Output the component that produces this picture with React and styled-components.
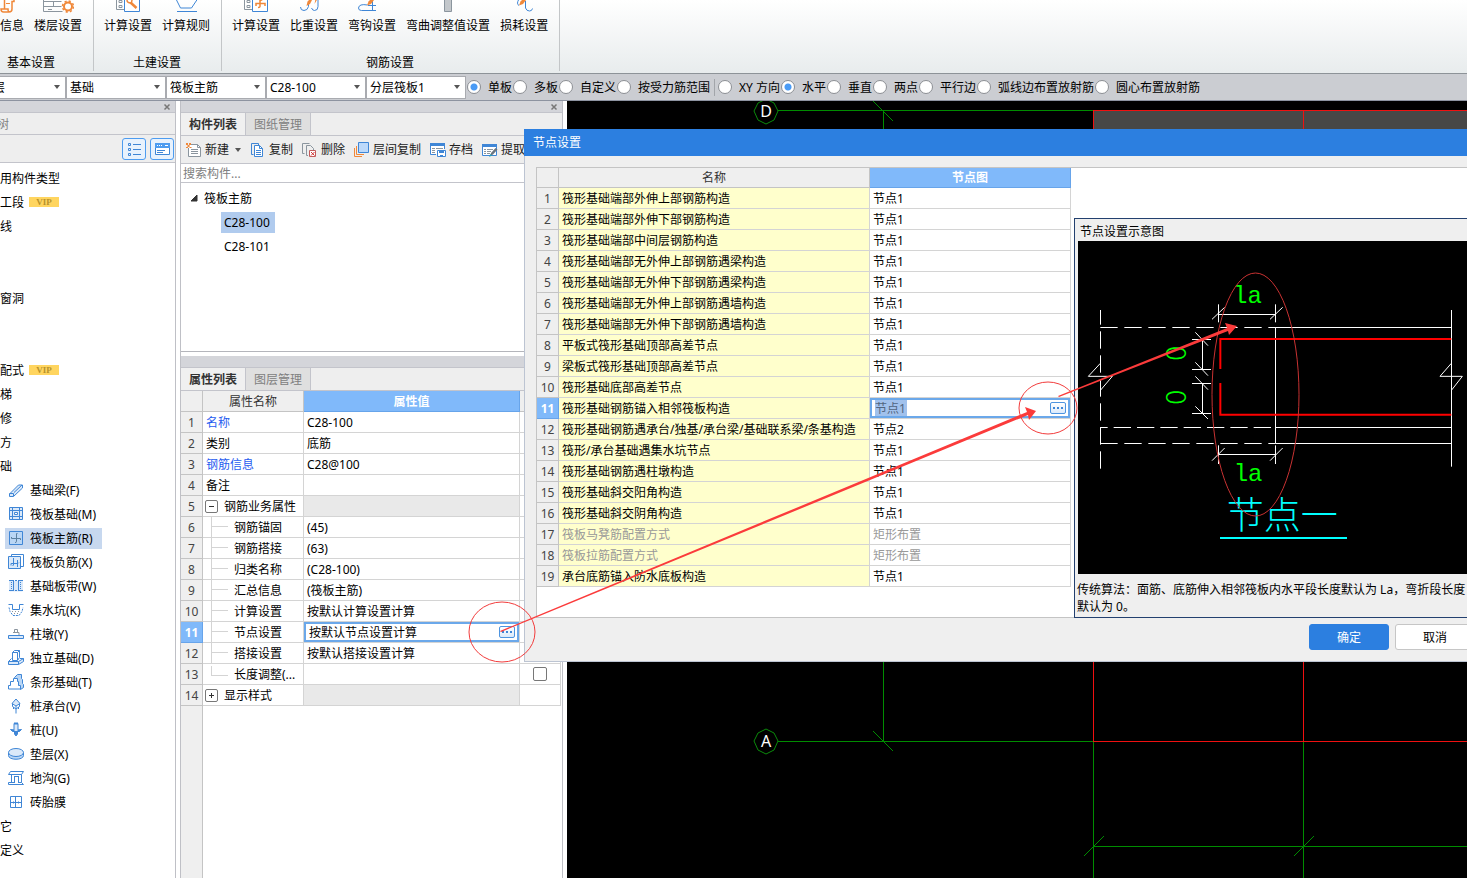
import React, { useState } from "react";
import styled, { createGlobalStyle, css } from "styled-components";

const GlobalStyle = createGlobalStyle`
  * {
    box-sizing: border-box;
  }
  body {
    margin: 0;
    background: #ffffff;
    overflow: hidden;
  }
  body, button, input, select {
    font-family: "Noto Sans", "Noto Sans CJK SC", sans-serif;
    font-size: 12px;
    line-height: 17px;
    color: #000000;
  }
  button, input, select {
    margin: 0;
    padding: 0;
    border: 0;
    background: none;
  }
`;

const Page = styled.div`
  position: relative;
  display: flex;
  flex-direction: column;
  min-height: 100vh;
  overflow: hidden;
  white-space: nowrap;
`;

/* ---------- ribbon ---------- */

const Ribbon = styled.header`
  display: flex;
  padding-bottom: 2px;
  border-bottom: 1px solid #8d9398;
  background: linear-gradient(#ffffff, #e8eced);
`;

const RibbonGroup = styled.section`
  display: flex;
  flex-direction: column;
  justify-content: space-between;
  height: 71px;
  padding: 0 11px 0 ${({ $cut }) => ($cut ? 0 : 10)}px;
  border-right: 1px solid #c3c6c8;
`;

const RibbonItems = styled.div`
  display: flex;
  gap: 10px;
`;

const RibbonButton = styled.button`
  display: flex;
  flex-direction: column;
  align-items: ${({ $cut }) => ($cut ? "flex-start" : "center")};
  gap: 4px;
`;

const RibbonLabel = styled.div`
  text-align: center;
  padding-right: ${({ $cut }) => ($cut ? 20 : 0)}px;
`;

/* ---------- option bar ---------- */

const OptionBar = styled.div`
  display: flex;
  align-items: center;
  height: 27px;
  border-bottom: 1px solid #8d93a0;
  background: #cbcdd2;
`;

const SelectBox = styled.div`
  display: grid;
  align-items: center;
  width: ${({ $cut }) => ($cut ? 66 : 100)}px;
  height: 23px;
  border: 1px solid #a9abb0;
  border-left-width: ${({ $cut }) => ($cut ? 0 : 1)}px;
  background: #ffffff;
  overflow: hidden;

  > * {
    grid-area: 1 / 1;
  }
  select {
    appearance: none;
    width: 100%;
    height: 21px;
    margin-left: ${({ $cut }) => ($cut ? -10 : 0)}px;
    padding-left: 3px;
  }
  svg {
    justify-self: end;
    margin-right: 5px;
    pointer-events: none;
  }
`;

const RadioGroup = styled.div`
  display: flex;
  align-items: center;
  padding-left: 1px;

  & + & {
    margin-left: 3px;
    padding-left: 3px;
    border-left: 1px solid #a2a5aa;
  }
`;

const RadioLabel = styled.label`
  display: flex;
  align-items: center;
  gap: 7px;
  margin-right: 1px;

  input {
    appearance: none;
    width: 14px;
    height: 14px;
    border: 1px solid #8c8f94;
    border-radius: 50%;
    background: #ffffff;
  }
  input:checked {
    background: radial-gradient(circle, #4a9bf5 0 3px, #ffffff 4px);
  }
`;

/* ---------- side panels ---------- */

const Workspace = styled.main`
  display: flex;
  flex: 1;
`;

const NavPanel = styled.aside`
  width: 176px;
  border-right: 1px solid #bfc0c6;
`;

const PanelStrip = styled.div`
  display: flex;
  justify-content: flex-end;
  align-items: center;
  height: 12px;
  padding-right: 4px;
  border-bottom: 1px solid #c3c4cb;
  background: #d4d5da;

  button {
    display: flex;
  }
`;

const NavTitle = styled.div`
  height: 22px;
  padding: 3px 0;
  border-bottom: 1px solid #c3c4cb;
  background: #eeeeee;
  color: #808080;
  text-indent: -3px;
`;

const NavTools = styled.div`
  display: flex;
  justify-content: flex-end;
  align-items: center;
  gap: 4px;
  height: 28px;
  padding-right: 1px;
  border-bottom: 1px solid #c3c4cb;
  background: #eeeeee;

  button {
    display: flex;
    align-items: center;
    justify-content: center;
    width: 24px;
    height: 22px;
    border: 1px solid #4d9cf0;
    border-radius: 3px;
    background: #e8f2fd;
  }
`;

const NavTree = styled.ul`
  margin: 0;
  padding: 3px 0 0;
  list-style: none;
`;

const NavRow = styled.li`
  display: flex;
  align-items: center;
  gap: 5px;
  height: 24px;
  padding-left: ${({ $leaf }) => ($leaf ? 5 : 0)}px;
`;

const NavLeaf = styled.span`
  display: flex;
  align-items: center;
  gap: 6px;
  height: 21px;
  padding: 0 9px 0 3px;
  background: ${({ $active }) => ($active ? "#c7d8ef" : "transparent")};
`;

const VipBadge = styled.span`
  width: 30px;
  height: 10px;
  background: #ffd55f;
  color: #b8922c;
  font: bold 9px/10px "Liberation Serif", serif;
  text-align: center;
`;

const MidPanel = styled.section`
  display: flex;
  flex-direction: column;
  width: 383px;
  margin: 0 4px;
  border: solid #bfc0c6;
  border-width: 0 1px;
`;

const Tabs = styled.div`
  display: flex;
  height: 23px;
  border-bottom: 1px solid #c3c4cb;
  background: #eeeeee;
`;

const Tab = styled.button`
  width: 65px;
  border-right: 1px solid #c3c4cb;
  background: ${({ $active }) => ($active ? "#f0f0f0" : "#dfdfdf")};
  color: ${({ $active }) => ($active ? "#333333" : "#808080")};
  font-weight: ${({ $active }) => ($active ? 700 : 400)};
`;

const Toolbar = styled.div`
  display: flex;
  align-items: center;
  gap: 9px;
  height: 28px;
  padding-left: 5px;
  border-bottom: 1px solid #c3c4cb;
  background: #eeeeee;
  overflow: hidden;
`;

const ToolButton = styled.button`
  display: flex;
  flex: none;
  align-items: center;
  gap: 3px;
  color: #222222;
`;

const SearchInput = styled.input`
  width: 100%;
  height: 19px;
  padding-left: 2px;
  border-bottom: 1px solid #c3c4cb;

  &::placeholder {
    color: #808080;
  }
`;

const PartTree = styled.ul`
  height: 169px;
  margin: 0 0 4px;
  padding: 3px 0 0;
  border-bottom: 1px solid #b4b5bb;
  list-style: none;
`;

const PartRow = styled.li`
  display: flex;
  align-items: center;
  gap: 6px;
  height: 24px;
  padding-left: ${({ $depth }) => ($depth ? 40 : 9)}px;

  span {
    height: 21px;
    padding: 2px 5px 2px 3px;
    background: ${({ $active }) => ($active ? "#b0cbee" : "transparent")};
  }
`;

/* ---------- grids ---------- */

const Grid = styled.table`
  flex: none;
  align-self: flex-start;
  border-collapse: separate;
  border-spacing: 0;
  table-layout: fixed;

  th,
  td {
    height: 21px;
    padding: 0 3px;
    border: solid #d4d4d4;
    border-width: 0 1px 1px 0;
    font-weight: 400;
    text-align: left;
    overflow: hidden;
  }
  thead th {
    border-color: #c4c4c4;
    background: #efefef;
    color: #333333;
    text-align: center;
  }
`;

const hot = css`
  && {
    border-color: #67a4ea;
    background: #80b9fa;
    color: #ffffff;
    font-weight: 700;
  }
`;

const HeadCell = styled.th`
  ${({ $hot }) => $hot && hot}
`;

const IndexCell = styled.th`
  && {
    padding: 0;
    border-color: #c4c4c4;
    background: #efefef;
    color: #444444;
    text-align: center;
  }
  ${({ $hot }) => $hot && hot}
`;

const NameCell = styled.td`
  background: ${({ $yellow }) => ($yellow ? "#ffffcc" : "#ffffff")};
  color: ${({ $tone }) => $tone || "#000000"};
`;

const ValueCell = styled.td`
  background: ${({ $shaded }) => ($shaded ? "#e9e9e9" : "#ffffff")};
  color: ${({ $tone }) => $tone || "#000000"};

  && {
    padding: ${({ $editing }) => ($editing ? 0 : "0 3px")};
  }
`;

const NameLine = styled.div`
  display: flex;
  align-items: center;
  gap: 6px;
  margin-left: -1px;
`;

const Branch = styled.span`
  align-self: flex-start;
  width: 17px;
  height: ${({ $last }) => ($last ? 10 : 20)}px;
  margin-left: 6px;
  border-left: 1px solid #d4d4d4;
  background: linear-gradient(#d4d4d4, #d4d4d4) 0 9px / 17px 1px no-repeat;
`;

const Expander = styled.button`
  display: flex;
  align-items: center;
  justify-content: center;
  width: 13px;
  height: 13px;
  border: 1px solid #777777;
  border-radius: 2px;
  background: #ffffff;
`;

const Editor = styled.div`
  display: flex;
  align-items: center;
  justify-content: space-between;
  height: 20px;
  padding: 0 2px 0 3px;
  border: 2px solid #6ba8ea;

  input {
    width: ${({ $picked }) => ($picked ? 32 : 160)}px;
    height: 16px;
    background: ${({ $picked }) => ($picked ? "#a1c1ec" : "transparent")};
    color: ${({ $picked }) => ($picked ? "#51657f" : "#000000")};
  }
`;

const MoreButton = styled.button`
  display: flex;
  align-items: center;
  justify-content: center;
  gap: 2px;
  width: 16px;
  height: 12px;
  border: 1px solid #4d94e0;
  border-radius: 2px;
  background: linear-gradient(#ffffff, #dbeafb);

  i {
    width: 2px;
    height: 2px;
    background: #3f86d6;
  }
`;

const GridTick = styled.input`
  appearance: none;
  display: block;
  width: 14px;
  height: 14px;
  margin: 0 auto;
  border: 1px solid #777777;
  border-radius: 2px;
  background: #ffffff;
`;

const GridRest = styled.div`
  flex: 1;
  width: 22px;
  border-right: 1px solid #c4c4c4;
  background: #efefef;
`;

/* ---------- drawing area ---------- */

const Viewport = styled.section`
  flex: 1;
  background: #000000;
  overflow: hidden;

  svg {
    display: block;
    width: 100%;
    height: 100%;
  }
`;

/* ---------- dialog ---------- */

const Dialog = styled.section`
  position: absolute;
  top: 129px;
  left: 524px;
  right: -20px;
  border: solid #bcc4d2;
  border-width: 0 0 1px 1px;
  background: #efefef;
`;

const DialogTitle = styled.h2`
  margin: 0 0 0 -1px;
  padding: 5px 9px;
  background: #2c7fe0;
  color: #ffffff;
  font-size: 12px;
  font-weight: 400;
  line-height: 17px;
`;

const DialogBody = styled.div`
  display: flex;
  align-items: flex-end;
  gap: 3px;
  margin: 11px 12px 0 11px;
  border: solid #c4c4c4;
  border-width: 1px 0 1px 1px;
  background: #ffffff;

  ${Grid} {
    margin-bottom: 30px;
  }
  thead th {
    height: 20px;
  }
`;

const Preview = styled.figure`
  flex: 1;
  margin: 0 0 -1px;
  border: 1px solid #23406f;
  background: #efefef;
  white-space: normal;
`;

const PreviewTitle = styled.div`
  padding: 4px 5px 1px;
`;

const PreviewStage = styled.div`
  margin-left: 3px;
  background: #000000;
  overflow: hidden;

  svg {
    display: block;
  }
`;

const PreviewNote = styled.figcaption`
  padding: 7px 0 2px 2px;
`;

const DialogFooter = styled.footer`
  display: flex;
  justify-content: flex-end;
  gap: 6px;
  padding: 6px 12px 11px;
`;

const DialogButton = styled.button`
  width: 80px;
  height: 26px;
  border: 1px solid ${({ $primary }) => ($primary ? "#2c7fe0" : "#c6c6c6")};
  border-radius: 3px;
  background: ${({ $primary }) => ($primary ? "#2c7fe0" : "#ffffff")};
  color: ${({ $primary }) => ($primary ? "#ffffff" : "#000000")};
`;

const Markup = styled.svg`
  position: absolute;
  inset: 0;
  width: 100%;
  height: 100%;
  pointer-events: none;
`;

/* ---------- icons ---------- */

const BLUE = "#3f86d6";
const PALE = "#dbe9f9";
const ORANGE = "#f0883a";
const GREY = "#8b959e";

const navIcons = {
  beam: (
    <>
      <path d="M2 11.500 10.500 3h4v3L6 14z" fill={PALE} stroke={BLUE} />
      <path d="M6 10.500 14 3M1.500 11.500h4v3h-4z" fill={PALE} stroke={BLUE} />
    </>
  ),
  raft: (
    <>
      <path d="M1.500 1.500h13v12h-13z" fill={PALE} stroke={BLUE} />
      <path d="M4.500 1v13M11.500 1v13M1 4.500h14M1 10.500h14" stroke={BLUE} />
      <path d="M6.500 6.500h3v2h-3z" fill="#fff" stroke={BLUE} />
    </>
  ),
  mainBar: (
    <>
      <path d="M1.500 1.500h13v13h-13z" fill="#b9d6f5" stroke={BLUE} />
      <path d="M9.500 3.500h-1v8q0 1-1.500 1M3.500 7v1.500h9V10" stroke="#5a7f9f" />
    </>
  ),
  negBar: (
    <>
      <path d="M3.500 2.500v-2h12v12h-3" stroke={BLUE} />
      <path d="M.5 2.500h12v12H.5z" fill={PALE} stroke={BLUE} />
      <path d="M5.500 4v7l-1 1M9.500 6v7M3 9.500h7l1-1M3 9.500v2" stroke={BLUE} />
    </>
  ),
  strip: (
    <>
      <path d="M1.500 3v10h13V3" fill={PALE} stroke={PALE} />
      <path d="M1 2.500h5M7 2.500h2M10 2.500h5M1 12.500h5M7 12.500h2M10 12.500h5M5.500 2v11M10.500 2v11" stroke={BLUE} />
      <path d="M3.500 4v8M12.500 4v8" stroke={BLUE} strokeDasharray="1 1" />
    </>
  ),
  sump: (
    <>
      <path d="M.5 2.500h4v5h7v-5h4" stroke={BLUE} />
      <path d="M1 5.500l1 4 3 4h6l3-4 1-4" stroke={BLUE} strokeDasharray="2 1" />
      <path d="M4 9.500h8M6 11.500h5" stroke={GREY} strokeDasharray="1 2" />
    </>
  ),
  pier: (
    <>
      <path d="M6.500 3.500h3v3h-3zM5 6.500h6v3" stroke={GREY} />
      <path d="M.5 9.500h15v3H.5z" fill={PALE} stroke={BLUE} />
    </>
  ),
  footing: (
    <>
      <path d="M.5 11.500h10v3H.5zM10.500 14.500l5-3v-3l-5 3M.5 11.500l3-3M12 8.500h3.500" fill={PALE} stroke={BLUE} />
      <path d="M4.500 10.500V2.500L6.500.5h5v7l-2 3z" fill="#fff" stroke={BLUE} />
      <path d="M9.500 10V2.500h-5M9.500 2.500l2-2" stroke={BLUE} />
    </>
  ),
  stripFooting: (
    <>
      <path d="M6.500 3.500l3-3h4v4l1 1v4l1 1v3l-3 2z" fill="#b9d6f5" stroke={BLUE} />
      <path d="M.5 15V11.500h2v-4h3v-3h4v3h1v4h2V15z" fill="#fff" stroke={BLUE} />
    </>
  ),
  cap: (
    <>
      <path d="M8 1l4 4.500L8 8 4 5.500z" fill={PALE} stroke={BLUE} />
      <path d="M4.500 5.500v3L8 11l3.500-2.500v-3M8 8v7.500M5.500 9v2M10.500 9v2" stroke={BLUE} />
    </>
  ),
  pile: (
    <>
      <path d="M2.500 7.500l2 2h2V12l1.500 2 1.500-2V9.500h2l2-2-4 .5h-3z" fill={BLUE} stroke={BLUE} />
      <path d="M6 1.500h4v8H6z" fill={PALE} stroke={BLUE} />
      <path d="M6 1.500h4" stroke={BLUE} strokeWidth="2" />
    </>
  ),
  bedding: (
    <>
      <path d="M.5 6.500v3c0 5 15 5 15 0v-3" fill="#b9d6f5" stroke={BLUE} />
      <ellipse cx="8" cy="6.500" rx="7.500" ry="4" fill={PALE} stroke={BLUE} />
    </>
  ),
  trench: (
    <path
      d="M.5 4.500l2-3h13l-2 3zM3.500 4.500v8M13.500 4.500v8M6.500 6v7M10.500 6v7M6.500 6.500h4M.5 14.500v-2h6M10.500 12.500h3l2 2H.5"
      stroke={BLUE}
    />
  ),
  brick: (
    <>
      <path d="M2.500 2.500h11v11h-11z" fill="#fff" stroke={BLUE} />
      <path d="M7.500 2v12M2 8.500h12M5.500 7.500v2M10.500 7.500v2" stroke={BLUE} />
    </>
  ),
};

const toolIcons = {
  create: (
    <>
      <path d="M4.500 2.500h7l3 3v9h-12V6" fill="#fff" stroke={GREY} />
      <path d="M11.500 2.500v3h3M5 7.500h7M5 9.500h7M5 11.500h7" stroke={GREY} />
      <path d="M0 1h2v2H0zM3 1h2v2H3zM1.500 3h2v2h-2zM0 5h2v1H0zM3.500 5h2v1h-2z" fill={ORANGE} />
    </>
  ),
  copy: (
    <>
      <path d="M3.500 12.500h-2v-11h7v2" stroke={BLUE} />
      <path d="M4.500 3.500h5l3 3v8h-8z" fill="#fff" stroke={BLUE} />
      <path d="M9.500 3.500v3h3M6 8.500h5M6 10.500h5M6 12.500h5" stroke={BLUE} />
    </>
  ),
  remove: (
    <>
      <path d="M2.500 11.500h-2v-10h7M6 13.500H4.500v-10h4l3 3V8" stroke={GREY} />
      <path d="M7.500 8.500h6v6h-6z" fill="#fff" stroke="#c25a5a" />
      <path d="M9 10l3.500 3.500M12.500 10 9 13.500" stroke="#d22f2f" />
    </>
  ),
  layer: (
    <>
      <path d="M4.500.5h10v10h-10z" fill="#bcd9fa" stroke={BLUE} />
      <path d="M2.500 4v8.500H10M.5 6v8.500H8" stroke={ORANGE} />
    </>
  ),
  save: (
    <>
      <path d="M6 12.500H.5V1.500h14V7" fill="#fff" stroke={BLUE} />
      <path d="M0 1h15v3H0z" fill={BLUE} />
      <path d="M2 6.500h3M6 6.500h7M2 8.500h3M2 10.500h3" stroke={GREY} />
      <path d="M7.500 8.500h8v6h-8z" fill="#fff" stroke={BLUE} />
      <path d="M9 8h5v3H9zM10 13h3v2h-3z" fill={BLUE} />
    </>
  ),
  extract: (
    <>
      <path d="M.5 2.500h14v11H.5z" fill="#fff" stroke={BLUE} />
      <path d="M0 2h15v3H0z" fill={BLUE} />
      <path d="M2 7.500h2M5 7.500h6M2 9.500h2M5 9.500h4M2 11.500h2M5 11.500h3" stroke={GREY} />
      <path d="M8 14l1-3 4.500-5 2 1.500-4.500 5z" fill="#6b7680" />
      <path d="M7 15l1.500-3 1.500 1.500z" fill="#22a3b5" />
    </>
  ),
};

const sheet = (
  <>
    <path d="M4.500-6v15.500h8M7 .5h3v2H7zM7 5.500h3v2H7z" stroke={GREY} />
    <path d="M12.500-6h15v17.500h-15z" fill="#fff" stroke={BLUE} />
  </>
);

const ribbonIcons = {
  info: (
    <>
      <path d="M4.500-2v10.500M14-.5v2h-2V9q0 3-3 3H3.500q-2.500 0-2.500-3h7q0 3 1.500 3" stroke={ORANGE} strokeWidth="1.500" />
      <path d="M6 3.500h4" stroke={ORANGE} />
    </>
  ),
  floor: (
    <>
      <path d="M1.500-3v14.500h19M1.500 1.500h18M1.500 6.500h18M11.500 2v5M6 9.500h4" stroke={GREY} />
      <circle cx="26" cy="6.500" r="6" fill="#fff" />
      <circle cx="26" cy="6.500" r="4" stroke={ORANGE} strokeWidth="2" />
      <circle cx="26" cy="6.500" r="5.500" stroke={ORANGE} strokeWidth="1.500" strokeDasharray="2.200 2.120" />
    </>
  ),
  calc: (
    <>
      {sheet}
      <path d="M15 0q0 3 4 3M19 3q1-1 1-4" stroke={ORANGE} strokeWidth="1.500" />
      <path d="M18.500 2.500l6 5.500" stroke={ORANGE} strokeWidth="2.500" />
    </>
  ),
  rule: <path d="M6-1l4.500 9h11l6-9M7 11.500h20" stroke={BLUE} />,
  rebar: (
    <>
      {sheet}
      <path d="M20-2v8.500q0 1-2 1M16 6V3.500h9V6M23-1l-3 2" stroke={ORANGE} strokeWidth="1.500" />
    </>
  ),
  weight: (
    <>
      <path d="M10.500 3v3.500q-1 4-4.500 4T2.500 7M20-1v7.500q0 4-3.500 4-2 0-3-2.500" stroke={BLUE} />
      <path d="M8.500 6l1-4.500L12-1l2 1-2 4zM16.500 4l1-5 2 0z" fill={ORANGE} />
    </>
  ),
  hook: (
    <>
      <path d="M11.500 5Q3 3.500 2.500 8q0 2.500 3 2.500H20M16.500 1v9.500M12 5.500h8" stroke={BLUE} />
      <path d="M11 5.500l1.500-4L15-1h3v1l-3 4z" fill={ORANGE} />
    </>
  ),
  bend: <path d="M12.500-2h7v13.500h-7z" fill="#c3c7cb" stroke={GREY} />,
  loss: (
    <>
      <path d="M17.500 1v7q1 3 4 3 2.500 0 3-2.500M11-1q-3 5 0 6.500" stroke={BLUE} />
      <path d="M11 5.500l1.500-4L15-1h3v1l-3 4z" fill={ORANGE} />
    </>
  ),
};

const Icon = ({ children, width = 16, height = 16 }) => (
  <svg width={width} height={height} viewBox={`0 0 ${width} ${height}`} fill="none" aria-hidden="true">
    {children}
  </svg>
);

const Caret = () => (
  <Icon width={6} height={4}>
    <path d="M0 0h6L3 4z" fill="#555" />
  </Icon>
);

const CloseMark = () => (
  <button type="button" aria-label="关闭">
    <Icon width={8} height={8}>
      <path d="M1.500 1.500l5 5M6.500 1.500l-5 5" stroke="#777" strokeWidth="1.500" />
    </Icon>
  </button>
);

const More = () => (
  <MoreButton type="button" aria-label="更多">
    <i />
    <i />
    <i />
  </MoreButton>
);

/* ---------- data ---------- */

const ribbonGroups = [
  {
    label: "基本设置",
    cut: true,
    items: [
      ["info", "信息"],
      ["floor", "楼层设置"],
    ],
  },
  {
    label: "土建设置",
    items: [
      ["calc", "计算设置"],
      ["rule", "计算规则"],
    ],
  },
  {
    label: "钢筋设置",
    items: [
      ["rebar", "计算设置"],
      ["weight", "比重设置"],
      ["hook", "弯钩设置"],
      ["bend", "弯曲调整值设置"],
      ["loss", "损耗设置"],
    ],
  },
];

const selects = ["层", "基础", "筏板主筋", "C28-100", "分层筏板1"];
const shapes = ["单板", "多板", "自定义", "按受力筋范围"];
const directions = ["XY 方向", "水平", "垂直", "两点", "平行边", "弧线边布置放射筋", "圆心布置放射筋"];

const navRows = [
  { text: "用构件类型" },
  { text: "工段", vip: true },
  { text: "线" },
  {},
  {},
  { text: "窗洞" },
  {},
  {},
  { text: "配式", vip: true },
  { text: "梯" },
  { text: "修" },
  { text: "方" },
  { text: "础" },
  { icon: "beam", text: "基础梁(F)" },
  { icon: "raft", text: "筏板基础(M)" },
  { icon: "mainBar", text: "筏板主筋(R)", active: true },
  { icon: "negBar", text: "筏板负筋(X)" },
  { icon: "strip", text: "基础板带(W)" },
  { icon: "sump", text: "集水坑(K)" },
  { icon: "pier", text: "柱墩(Y)" },
  { icon: "footing", text: "独立基础(D)" },
  { icon: "stripFooting", text: "条形基础(T)" },
  { icon: "cap", text: "桩承台(V)" },
  { icon: "pile", text: "桩(U)" },
  { icon: "bedding", text: "垫层(X)" },
  { icon: "trench", text: "地沟(G)" },
  { icon: "brick", text: "砖胎膜" },
  { text: "它" },
  { text: "定义" },
];

const tools = [
  ["create", "新建"],
  ["copy", "复制"],
  ["remove", "删除"],
  ["layer", "层间复制"],
  ["save", "存档"],
  ["extract", "提取"],
];

const properties = [
  { name: "名称", value: "C28-100", link: true },
  { name: "类别", value: "底筋" },
  { name: "钢筋信息", value: "C28@100", link: true },
  { name: "备注", value: "" },
  { name: "钢筋业务属性", group: "open" },
  { name: "钢筋锚固", value: "(45)", child: true },
  { name: "钢筋搭接", value: "(63)", child: true },
  { name: "归类名称", value: "(C28-100)", child: true },
  { name: "汇总信息", value: "(筏板主筋)", child: true },
  { name: "计算设置", value: "按默认计算设置计算", child: true },
  { name: "节点设置", value: "按默认节点设置计算", child: true, editing: true },
  { name: "搭接设置", value: "按默认搭接设置计算", child: true },
  { name: "长度调整(...", value: "", child: true, last: true, tick: true },
  { name: "显示样式", group: "closed" },
];

const nodes = [
  ["筏形基础端部外伸上部钢筋构造", "节点1"],
  ["筏形基础端部外伸下部钢筋构造", "节点1"],
  ["筏形基础端部中间层钢筋构造", "节点1"],
  ["筏形基础端部无外伸上部钢筋遇梁构造", "节点1"],
  ["筏形基础端部无外伸下部钢筋遇梁构造", "节点1"],
  ["筏形基础端部无外伸上部钢筋遇墙构造", "节点1"],
  ["筏形基础端部无外伸下部钢筋遇墙构造", "节点1"],
  ["平板式筏形基础顶部高差节点", "节点1"],
  ["梁板式筏形基础顶部高差节点", "节点1"],
  ["筏形基础底部高差节点", "节点1"],
  ["筏形基础钢筋锚入相邻筏板构造", "节点1"],
  ["筏形基础钢筋遇承台/独基/承台梁/基础联系梁/条基构造", "节点2"],
  ["筏形/承台基础遇集水坑节点", "节点1"],
  ["筏形基础钢筋遇柱墩构造", "节点1"],
  ["筏形基础斜交阳角构造", "节点1"],
  ["筏形基础斜交阴角构造", "节点1"],
  ["筏板马凳筋配置方式", "矩形布置"],
  ["筏板拉筋配置方式", "矩形布置"],
  ["承台底筋锚入防水底板构造", "节点1"],
];
const activeNode = 10;

/* ---------- parts ---------- */

const PropertyName = ({ row }) => {
  if (row.group) {
    return (
      <NameLine>
        <Expander type="button" aria-label={row.name}>
          <Icon width={7} height={7}>
            <path d={row.group === "closed" ? "M1 3.500h5M3.500 1v5" : "M1 3.500h5"} stroke="#333" />
          </Icon>
        </Expander>
        {row.name}
      </NameLine>
    );
  }
  if (row.child) {
    return (
      <NameLine>
        <Branch $last={row.last} />
        {row.name}
      </NameLine>
    );
  }
  return row.name;
};

const PropertyGrid = () => (
  <Grid>
    <colgroup>
      <col width="22" />
      <col width="101" />
      <col width="216" />
      <col width="41" />
    </colgroup>
    <thead>
      <tr>
        <HeadCell />
        <HeadCell>属性名称</HeadCell>
        <HeadCell $hot>属性值</HeadCell>
        <HeadCell />
      </tr>
    </thead>
    <tbody>
      {properties.map((row, i) => (
        <tr key={row.name}>
          <IndexCell $hot={row.editing}>{i + 1}</IndexCell>
          <NameCell $tone={row.link ? "#1f5cf0" : undefined}>
            <PropertyName row={row} />
          </NameCell>
          <ValueCell $shaded={Boolean(row.group)} $editing={row.editing}>
            {row.editing ? (
              <Editor>
                <input aria-label={row.name} defaultValue={row.value} />
                <More />
              </Editor>
            ) : (
              row.value
            )}
          </ValueCell>
          <ValueCell>{row.tick && <GridTick type="checkbox" aria-label={row.name} />}</ValueCell>
        </tr>
      ))}
    </tbody>
  </Grid>
);

const NodeGrid = () => (
  <Grid>
    <colgroup>
      <col width="22" />
      <col width="311" />
      <col width="201" />
    </colgroup>
    <thead>
      <tr>
        <HeadCell />
        <HeadCell>名称</HeadCell>
        <HeadCell $hot>节点图</HeadCell>
      </tr>
    </thead>
    <tbody>
      {nodes.map(([name, value], i) => {
        const tone = value === "矩形布置" ? "#999999" : undefined;
        return (
          <tr key={name}>
            <IndexCell $hot={i === activeNode}>{i + 1}</IndexCell>
            <NameCell $yellow $tone={tone}>
              {name}
            </NameCell>
            <ValueCell $tone={tone} $editing={i === activeNode}>
              {i === activeNode ? (
                <Editor $picked>
                  <input aria-label={name} defaultValue={value} />
                  <More />
                </Editor>
              ) : (
                value
              )}
            </ValueCell>
          </tr>
        );
      })}
    </tbody>
  </Grid>
);

const AxisBubble = ({ y, name }) => (
  <>
    <path d={`M199 ${y - 12}l8 4 4 8-4 9-8 4-8-4-4-9 4-8z`} stroke="#0b8a0b" />
    <text x="199" y={y + 6} fill="#fff" fontSize="16" textAnchor="middle" fontFamily="Noto Sans, sans-serif">
      {name}
    </text>
  </>
);

const AxisDrawing = () => (
  <svg fill="none" aria-hidden="true">
    <path d="M526 9h1100v60H526z" fill="#474747" />
    <g stroke="#008c00">
      <path d="M211 9.500h315" />
      <path d="M316.500 9v632" />
      <path d="M211 640.500h315" />
      <path d="M526.500 641v400" />
      <path d="M736.500 641v400" />
      <path d="M526 745.500h1100" />
      <path d="M306 0l20 20M306 630l20 20M517 755l20-20M727 755l20-20" />
    </g>
    <g stroke="#f01010">
      <path d="M526 9.500h1100" />
      <path d="M526.500 9v632" />
      <path d="M736.500 9v632" />
      <path d="M526 640.500h1100" />
    </g>
    <AxisBubble y={10} name="D" />
    <AxisBubble y={640} name="A" />
  </svg>
);

// section sketch, three units to one pixel
const NodeSketch = () => (
  <svg width="389" height="333" viewBox="24 93 1167 999" fill="none" role="img" aria-label="节点一">
    <g stroke="#fff" strokeWidth="3">
      <path d="M91.500 300v476" strokeDasharray="52 20" strokeDashoffset="8" />
      <path d="M91 352.500h526M91 700.500h526" strokeDasharray="52 20" />
      <path d="M91 652.500h526" strokeDasharray="52 18" strokeDashoffset="30" />
      <path d="M91.500 652v48M616 352.500h528M616 652.500h528M616 700.500h528M616.500 352v348M1144.500 300v470" />
      <path d="M91 460l-36 39h72l-35 41M1144 460l-34 39h67l-32 41" />
      <path d="M445.500 283v54M616.500 283v54M445 313.500h172M426 328l38-36M600 328l38-36" />
      <path d="M445.500 706v56M616.500 706v56M445 733.500h172M426 752l38-38M600 752l38-38" />
      <path d="M397.500 388v90M366 388.500h57M366 478.500h57M376 367l38 40M376 457l38 40" />
      <path d="M397.500 520v90M366 520.500h57M366 610.500h57M376 499l38 40M376 589l38 38" />
    </g>
    <path d="M1144 387H451v90M451 519v95h693" stroke="#ff0000" strokeWidth="6" />
    <path d="M450 984h381" stroke="#00ffff" strokeWidth="6" />
    <g fill="#00ff00" fontFamily="Liberation Mono, monospace" fontSize="72">
      <text x="489" y="278">la</text>
      <text x="491" y="814">la</text>
    </g>
    <g fill="#00ff00" fontFamily="Noto Sans CJK SC, sans-serif" fontWeight="300" fontSize="84" textAnchor="middle">
      <text transform="translate(347 430) rotate(-90)">0</text>
      <text transform="translate(347 562) rotate(-90)">0</text>
    </g>
    <text x="470" y="958" fill="#00ffff" fontFamily="Noto Sans CJK SC, sans-serif" fontWeight="300" fontSize="111">
      节点一
    </text>
  </svg>
);

const MarkupLayer = () => (
  <Markup fill="none" stroke="#f23c3c" aria-hidden="true">
    <ellipse cx="502" cy="632" rx="33" ry="30" />
    <ellipse cx="1048" cy="408" rx="29" ry="26" />
    <ellipse cx="1255.500" cy="394.500" rx="43.500" ry="121.500" stroke="#c83232" />
    <g fill="#fb3b3b" stroke="none">
      <path d="M500 631L1027 412l-2-5 11 4-7 9-1-5L501 632z" />
      <path d="M1058 396L1227 328l-2-5 12 3-8 9-1-4L1059 397z" />
    </g>
  </Markup>
);

const App = () => {
  const [shape, setShape] = useState("单板");
  const [direction, setDirection] = useState("水平");

  return (
    <Page>
      <GlobalStyle />
      <Ribbon>
        {ribbonGroups.map(({ label, cut, items }) => (
          <RibbonGroup key={label} $cut={cut}>
            <RibbonItems>
              {items.map(([icon, text]) => (
                <RibbonButton key={icon} type="button" $cut={icon === "info"}>
                  <Icon width={icon === "info" ? 16 : 32} height={13}>
                    {ribbonIcons[icon]}
                  </Icon>
                  {text}
                </RibbonButton>
              ))}
            </RibbonItems>
            <RibbonLabel $cut={cut}>{label}</RibbonLabel>
          </RibbonGroup>
        ))}
      </Ribbon>

      <OptionBar>
        {selects.map((value, i) => (
          <SelectBox key={value} $cut={i === 0}>
            <select aria-label={value} defaultValue={value}>
              <option>{value}</option>
            </select>
            <Caret />
          </SelectBox>
        ))}
        <RadioGroup>
          {shapes.map((name) => (
            <RadioLabel key={name}>
              <input type="radio" name="shape" checked={shape === name} onChange={() => setShape(name)} />
              {name}
            </RadioLabel>
          ))}
        </RadioGroup>
        <RadioGroup>
          {directions.map((name) => (
            <RadioLabel key={name}>
              <input
                type="radio"
                name="direction"
                checked={direction === name}
                onChange={() => setDirection(name)}
              />
              {name}
            </RadioLabel>
          ))}
        </RadioGroup>
      </OptionBar>

      <Workspace>
        <NavPanel>
          <PanelStrip>
            <CloseMark />
          </PanelStrip>
          <NavTitle>树</NavTitle>
          <NavTools>
            <button type="button" aria-label="列表">
              <Icon>
                <path d="M2.500 2.500h2v2h-2zM2.500 7.500h2v2h-2zM2.500 12.500h2v2h-2zM7 3.500h8M7 8.500h8M7 13.500h8" stroke={BLUE} />
              </Icon>
            </button>
            <button type="button" aria-label="窗口">
              <Icon>
                <path d="M1.500 2.500h14v11h-14z" fill="#fff" stroke={BLUE} />
                <path d="M1 2h15v5H1z" fill="#4d9cf0" />
                <path d="M3 4.500h1M5 4.500h1M7 4.500h1M11 4.500h3" stroke="#fff" />
                <path d="M3 9.500h8M3 11.500h6" stroke={BLUE} />
              </Icon>
            </button>
          </NavTools>
          <NavTree>
            {navRows.map((row, i) => (
              <NavRow key={i} $leaf={Boolean(row.icon)}>
                {row.icon ? (
                  <NavLeaf $active={row.active}>
                    <Icon>{navIcons[row.icon]}</Icon>
                    {row.text}
                  </NavLeaf>
                ) : (
                  row.text
                )}
                {row.vip && <VipBadge>VIP</VipBadge>}
              </NavRow>
            ))}
          </NavTree>
        </NavPanel>

        <MidPanel>
          <PanelStrip>
            <CloseMark />
          </PanelStrip>
          <Tabs>
            <Tab type="button" $active>
              构件列表
            </Tab>
            <Tab type="button">图纸管理</Tab>
          </Tabs>
          <Toolbar>
            {tools.map(([icon, text]) => (
              <ToolButton key={icon} type="button">
                <Icon>{toolIcons[icon]}</Icon>
                {text}
                {icon === "create" && (
                  <>
                    <span />
                    <Caret />
                  </>
                )}
              </ToolButton>
            ))}
          </Toolbar>
          <SearchInput aria-label="搜索构件" placeholder="搜索构件..." />
          <PartTree>
            <PartRow>
              <Icon width={8} height={8}>
                <path d="M7 1v6H1z" fill="#333" stroke="#333" />
              </Icon>
              筏板主筋
            </PartRow>
            <PartRow $depth={1} $active>
              <span>C28-100</span>
            </PartRow>
            <PartRow $depth={1}>
              <span>C28-101</span>
            </PartRow>
          </PartTree>
          <PanelStrip />
          <Tabs>
            <Tab type="button" $active>
              属性列表
            </Tab>
            <Tab type="button">图层管理</Tab>
          </Tabs>
          <PropertyGrid />
          <GridRest />
        </MidPanel>

        <Viewport>
          <AxisDrawing />
        </Viewport>
      </Workspace>

      <Dialog role="dialog" aria-labelledby="dialog-title">
        <DialogTitle id="dialog-title">节点设置</DialogTitle>
        <DialogBody>
          <NodeGrid />
          <Preview>
            <PreviewTitle>节点设置示意图</PreviewTitle>
            <PreviewStage>
              <NodeSketch />
            </PreviewStage>
            <PreviewNote>
              传统算法：面筋、底筋伸入相邻筏板内水平段长度默认为 La，弯折段长度默认为 0。
            </PreviewNote>
          </Preview>
        </DialogBody>
        <DialogFooter>
          <DialogButton type="button" $primary>
            确定
          </DialogButton>
          <DialogButton type="button">取消</DialogButton>
        </DialogFooter>
      </Dialog>

      <MarkupLayer />
    </Page>
  );
};

export default App;
